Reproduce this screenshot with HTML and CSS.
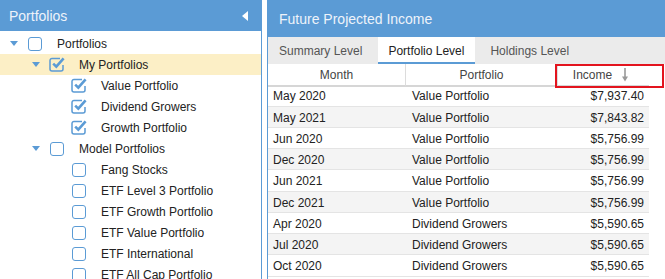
FILE: index.html
```html
<!DOCTYPE html>
<html>
<head>
<meta charset="utf-8">
<link rel="stylesheet" href="styles.css">
</head>
<body>
<div class="app">
  <aside class="left">
    <div class="left-header">
      <span>Portfolios</span>
      <svg class="collapse" width="6" height="10" viewBox="0 0 6 10"><path d="M6 0 L0 5 L6 10 Z" fill="#fff"/></svg>
    </div>
    <div class="tree">
      <div class="node lvl0"><span class="tri"></span><span class="cb"></span><span class="label">Portfolios</span></div>
      <div class="node lvl1 selected"><span class="tri"></span><span class="cb checked"><svg width="18" height="16" viewBox="0 0 18 16"><path d="M11 2.5 H3 a2 2 0 0 0 -2 2 v8.5 a2 2 0 0 0 2 2 h9 a2 2 0 0 0 2 -2 v-4" fill="none" stroke="#5b9bd5" stroke-width="1.5"/><path d="M4.2 7.6 L7.3 10.6 L14.6 2.4" fill="none" stroke="#5b9bd5" stroke-width="2.6"/></svg></span><span class="label">My Portfolios</span></div>
      <div class="node lvl2"><span class="tri none"></span><span class="cb checked"><svg width="18" height="16" viewBox="0 0 18 16"><path d="M11 2.5 H3 a2 2 0 0 0 -2 2 v8.5 a2 2 0 0 0 2 2 h9 a2 2 0 0 0 2 -2 v-4" fill="none" stroke="#5b9bd5" stroke-width="1.5"/><path d="M4.2 7.6 L7.3 10.6 L14.6 2.4" fill="none" stroke="#5b9bd5" stroke-width="2.6"/></svg></span><span class="label">Value Portfolio</span></div>
      <div class="node lvl2"><span class="tri none"></span><span class="cb checked"><svg width="18" height="16" viewBox="0 0 18 16"><path d="M11 2.5 H3 a2 2 0 0 0 -2 2 v8.5 a2 2 0 0 0 2 2 h9 a2 2 0 0 0 2 -2 v-4" fill="none" stroke="#5b9bd5" stroke-width="1.5"/><path d="M4.2 7.6 L7.3 10.6 L14.6 2.4" fill="none" stroke="#5b9bd5" stroke-width="2.6"/></svg></span><span class="label">Dividend Growers</span></div>
      <div class="node lvl2"><span class="tri none"></span><span class="cb checked"><svg width="18" height="16" viewBox="0 0 18 16"><path d="M11 2.5 H3 a2 2 0 0 0 -2 2 v8.5 a2 2 0 0 0 2 2 h9 a2 2 0 0 0 2 -2 v-4" fill="none" stroke="#5b9bd5" stroke-width="1.5"/><path d="M4.2 7.6 L7.3 10.6 L14.6 2.4" fill="none" stroke="#5b9bd5" stroke-width="2.6"/></svg></span><span class="label">Growth Portfolio</span></div>
      <div class="node lvl1"><span class="tri"></span><span class="cb"></span><span class="label">Model Portfolios</span></div>
      <div class="node lvl2"><span class="tri none"></span><span class="cb"></span><span class="label">Fang Stocks</span></div>
      <div class="node lvl2"><span class="tri none"></span><span class="cb"></span><span class="label">ETF Level 3 Portfolio</span></div>
      <div class="node lvl2"><span class="tri none"></span><span class="cb"></span><span class="label">ETF Growth Portfolio</span></div>
      <div class="node lvl2"><span class="tri none"></span><span class="cb"></span><span class="label">ETF Value Portfolio</span></div>
      <div class="node lvl2"><span class="tri none"></span><span class="cb"></span><span class="label">ETF International</span></div>
      <div class="node lvl2"><span class="tri none"></span><span class="cb"></span><span class="label">ETF All Cap Portfolio</span></div>
    </div>
  </aside>
  <main class="right">
    <div class="right-header">Future Projected Income</div>
    <div class="tabs">
      <div class="tab">Summary Level</div>
      <div class="tab active">Portfolio Level</div>
      <div class="tab">Holdings Level</div>
    </div>
    <div class="grid-wrap">
      <div class="grid">
        <div class="th">Month</div>
        <div class="th">Portfolio</div>
        <div class="th last">Income <svg class="sort" width="6" height="14" viewBox="0 0 6 14"><path d="M3 0 V12" stroke="#999" stroke-width="1.6"/><path d="M0 8.5 L3 13.5 L6 8.5 Z" fill="#999"/></svg></div>

        <div class="td">May 2020</div><div class="td">Value Portfolio</div><div class="td num">$7,937.40</div>
        <div class="td alt">May 2021</div><div class="td alt">Value Portfolio</div><div class="td alt num">$7,843.82</div>
        <div class="td">Jun 2020</div><div class="td">Value Portfolio</div><div class="td num">$5,756.99</div>
        <div class="td alt">Dec 2020</div><div class="td alt">Value Portfolio</div><div class="td alt num">$5,756.99</div>
        <div class="td">Jun 2021</div><div class="td">Value Portfolio</div><div class="td num">$5,756.99</div>
        <div class="td alt">Dec 2021</div><div class="td alt">Value Portfolio</div><div class="td alt num">$5,756.99</div>
        <div class="td">Apr 2020</div><div class="td">Dividend Growers</div><div class="td num">$5,590.65</div>
        <div class="td alt">Jul 2020</div><div class="td alt">Dividend Growers</div><div class="td alt num">$5,590.65</div>
        <div class="td">Oct 2020</div><div class="td">Dividend Growers</div><div class="td num">$5,590.65</div>
      </div>
      <div class="highlight-box"></div>
    </div>
  </main>
</div>
</body>
</html>
```
FILE: styles.css
```css
* { box-sizing: border-box; }
html, body { margin: 0; padding: 0; }
body {
  font-family: "Liberation Sans", Arial, sans-serif;
  font-size: 12px;
  color: #222;
  background: #fff;
  width: 665px;
  height: 279px;
  overflow: hidden;
}
.app {
  display: flex;
  height: 279px;
}
.left {
  width: 262px;
  flex: none;
  border-right: 1px solid #5b9bd5;
  height: 100%;
  overflow: hidden;
}
.left-header {
  height: 31px;
  background: #5b9bd5;
  color: #eef3fa;
  font-size: 14px;
  display: flex;
  align-items: center;
  justify-content: space-between;
  padding: 0 13px 0 9px;
}
.tree {
  padding-top: 1.5px;
}
.node {
  height: 21px;
  display: flex;
  align-items: center;
  padding-top: 1px;
}
.node.lvl0 { padding-left: 10px; }
.node.lvl1 { padding-left: 32px; }
.node.lvl2 { padding-left: 54px; }
.node.selected { background: #fcefc6; }
.tri {
  width: 0;
  height: 0;
  border-left: 4.5px solid transparent;
  border-right: 4.5px solid transparent;
  border-top: 5px solid #5b9bd5;
  margin-right: 10px;
  flex: none;
}
.tri.none { border-top-color: transparent; }
.cb {
  width: 14px;
  height: 14px;
  border: 1.5px solid #5b9bd5;
  border-radius: 3px;
  flex: none;
  margin-right: 15px;
  position: relative;
}
.cb.checked {
  border: none;
}
.cb.checked svg {
  position: absolute;
  left: -1px;
  top: -2px;
}
.label {
  white-space: nowrap;
  color: #222;
}
.right {
  flex: 1;
  margin-left: 5px;
  border-left: 1px solid #5b9bd5;
  min-width: 0;
}
.right-header {
  height: 37px;
  background: #5b9bd5;
  color: #eef3fa;
  font-size: 14px;
  display: flex;
  align-items: center;
  padding-left: 11px;
}
.tabs {
  height: 27px;
  background: #ebebeb;
  display: flex;
  gap: 5px;
  padding-left: 0.5px;
}
.tab {
  padding: 2px 10.5px 0;
  line-height: 25px;
  color: #555;
  white-space: nowrap;
}
.tab.active {
  background: #fff;
  color: #222;
  box-shadow: inset 0 -2px 0 #5b9bd5;
}
.grid-wrap {
  position: relative;
}
.grid {
  width: 381px;
  display: grid;
  grid-template-columns: 138px 152px 91px;
  grid-auto-rows: 21.25px;
}
.th {
  height: 22.5px;
  padding-top: 2px;
  border-bottom: 2px solid #d6d6d6;
  border-right: 1px solid #dcdcdc;
  color: #444;
  display: flex;
  align-items: center;
  justify-content: center;
}
.th.last { border-right: none; gap: 10px; padding-right: 6px; }
.sort { flex: none; }
.td {
  display: flex;
  align-items: center;
  padding: 2px 5px 0;
  border-bottom: 1px solid #e4e4e4;
  white-space: nowrap;
}
.td:nth-child(3n+2) { padding-left: 6px; }
.td.alt { background: #f4f4f4; }
.td.num { justify-content: flex-end; }
.highlight-box {
  position: absolute;
  left: 287px;
  top: 0;
  width: 109px;
  height: 24px;
  border: 2px solid #e3141e;
}
```
